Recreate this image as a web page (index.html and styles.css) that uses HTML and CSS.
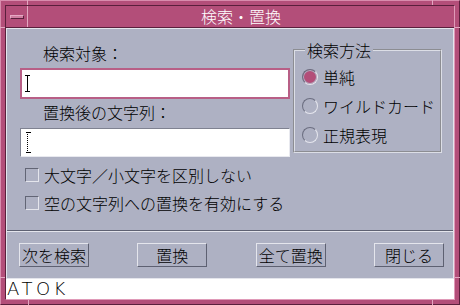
FILE: index.html
```html
<!DOCTYPE html>
<html lang="ja">
<head>
    <meta charset="UTF-8">
    <title>検索・置換</title>
    <link rel="stylesheet" href="styles.css">
</head>
<body>
    <div class="window">
        <!-- 枠のつまみ -->
        <span class="notch notch-top-l"></span>
        <span class="notch notch-top-r"></span>
        <span class="notch notch-bot-l"></span>
        <span class="notch notch-bot-r"></span>
        <span class="notch notch-left-t"></span>
        <span class="notch notch-left-b"></span>
        <span class="notch notch-right-t"></span>
        <span class="notch notch-right-b"></span>

        <div class="inner">
            <div class="titlebar">
                <div class="menu-btn"><span class="dash"></span></div>
                <div class="title">検索・置換</div>
            </div>

            <div class="content">
                <div class="main">
                    <div class="left">
                        <div class="label first">検索対象：</div>
                        <div class="field focused"><span class="ibeam"></span></div>
                        <div class="label second">置換後の文字列：</div>
                        <div class="field plain"><span class="ibeam dotted"></span></div>
                    </div>

                    <fieldset class="method">
                        <legend>検索方法</legend>
                        <div class="radio-row"><span class="radio on"></span>単純</div>
                        <div class="radio-row"><span class="radio"></span>ワイルドカード</div>
                        <div class="radio-row"><span class="radio"></span>正規表現</div>
                    </fieldset>
                </div>

                <div class="checks">
                    <div class="check-row"><span class="checkbox"></span>大文字／小文字を区別しない</div>
                    <div class="check-row"><span class="checkbox"></span>空の文字列への置換を有効にする</div>
                </div>

                <div class="separator"></div>

                <div class="buttons">
                    <button class="btn default">次を検索</button>
                    <button class="btn">置換</button>
                    <button class="btn default">全て置換</button>
                    <button class="btn">閉じる</button>
                </div>
            </div>

            <div class="status">ATOK</div>
        </div>
    </div>
</body>
</html>
```

FILE: styles.css
```css
body {
    margin: 0;
    font-family: "Noto Sans CJK JP", "Liberation Sans", sans-serif;
    font-size: 16px;
    font-weight: 300;
    color: #000000;
}

.window {
    position: relative;
    width: 460px;
    height: 305px;
    box-sizing: border-box;
    background-color: #b34e79;
    border: 1px solid;
    border-color: #d88cad #5a1f3c #5a1f3c #d88cad;
    padding: 4px;
}

.notch {
    position: absolute;
    background-color: #e3a6c0;
}

.notch-top-l, .notch-top-r, .notch-bot-l, .notch-bot-r {
    width: 1px;
    height: 5px;
}

.notch-left-t, .notch-left-b, .notch-right-t, .notch-right-b {
    width: 5px;
    height: 1px;
}

.notch-top-l { left: 26px; top: -1px; }
.notch-top-r { left: 431px; top: -1px; }
.notch-bot-l { left: 27px; bottom: -1px; }
.notch-bot-r { left: 431px; bottom: -1px; }
.notch-left-t { left: -1px; top: 26px; }
.notch-left-b { left: -1px; top: 276px; }
.notch-right-t { right: -1px; top: 26px; }
.notch-right-b { right: -1px; top: 276px; }

.inner {
    height: 100%;
    box-sizing: border-box;
    border: 1px solid;
    border-color: #5a1f3c #e09ab8 #e09ab8 #5a1f3c;
    display: flex;
    flex-direction: column;
}

.titlebar {
    display: flex;
    height: 21px;
    background-color: #b34e79;
    border-bottom: 1px solid #5a1f3c;
}

.menu-btn {
    width: 21px;
    border-right: 1px solid #e3a6c0;
    display: flex;
    align-items: center;
    justify-content: center;
}

.dash {
    width: 12px;
    height: 2px;
    background-color: #cf7ea1;
    border: 1px solid;
    border-color: #e7aac4 #5a1f3c #5a1f3c #e7aac4;
}

.title {
    flex: 1;
    text-align: center;
    color: #ffffff;
    line-height: 21px;
}

.content {
    height: 249px;
    background-color: #aeb1c3;
    border: 1px solid #e4e5ec;
    border-bottom: none;
}

.main {
    display: flex;
    gap: 3px;
    padding: 0 11px 0 13px;
}

.left {
    width: 270px;
}

.label {
    height: 20px;
    line-height: 20px;
    padding-left: 23px;
}

.label.first {
    margin-top: 14px;
}

.label.second {
    margin-top: 3px;
}

.field {
    box-sizing: border-box;
    background-color: #ffffff;
    display: flex;
    align-items: center;
}

.field.focused {
    height: 31px;
    margin-top: 5px;
    border: 2px solid #b85f86;
    padding-left: 4px;
}

.field.plain {
    height: 29px;
    margin-top: 6px;
    border: 1px solid;
    border-color: #7f8291 #e8e9ef #e8e9ef #7f8291;
    padding-left: 5px;
}

.ibeam {
    position: relative;
    width: 1px;
    height: 17px;
    margin-left: 1px;
    background-color: #000000;
}

.ibeam::before, .ibeam::after {
    content: "";
    position: absolute;
    left: -2px;
    width: 5px;
    height: 1px;
    background-color: #000000;
}

.ibeam::before { top: 0; }
.ibeam::after { bottom: 0; }

.ibeam.dotted {
    height: 21px;
    background-color: transparent;
    border-left: 1px dotted #000000;
    width: 0;
}

.method {
    box-sizing: border-box;
    width: 149px;
    height: 111px;
    margin: 13px 0 0 0;
    padding: 4px 0 2px 7px;
    border: 2px groove #dcdee6;
}

.method legend {
    padding: 0 2px;
    margin-left: 3px;
    line-height: 16px;
}

.radio-row {
    display: flex;
    align-items: center;
    gap: 5px;
    height: 29px;
    line-height: 20px;
}

.radio {
    width: 16px;
    height: 16px;
    box-sizing: border-box;
    border-radius: 50%;
    border: 1px solid;
    border-color: #6b6e80 #e6e7ee #e6e7ee #6b6e80;
}

.radio.on {
    background-color: #b34e79;
    box-shadow: inset 0 0 0 1px #aeb1c3;
}

.checks {
    display: flex;
    flex-direction: column;
    gap: 8px;
    margin-top: 8px;
    padding-left: 18px;
}

.check-row {
    display: flex;
    align-items: center;
    gap: 5px;
    height: 20px;
    line-height: 20px;
}

.checkbox {
    width: 14px;
    height: 14px;
    box-sizing: border-box;
    border: 1px solid;
    border-color: #626575 #e4e5ec #e4e5ec #626575;
}

.separator {
    margin-top: 17px;
    border-top: 1px solid #5e6172;
    border-bottom: 1px solid #e4e5ec;
}

.buttons {
    display: flex;
    justify-content: space-between;
    margin-top: 11px;
    padding: 0 9px 0 12px;
}

.btn {
    width: 70px;
    height: 24px;
    padding: 0;
    font-family: inherit;
    font-size: 16px;
    font-weight: 300;
    line-height: 20px;
    color: #000000;
    background-color: #aeb1c3;
    border: 1px solid;
    border-color: #e4e5ec #5e6172 #5e6172 #e4e5ec;
}

.btn.default {
    box-shadow: inset 0 0 0 1px #aeb1c3;
}

.status {
    height: 20px;
    background-color: #ffffff;
    border-top: 1px solid #e4e5ec;
    padding-left: 1px;
    font-family: "DejaVu Sans", "Liberation Sans", sans-serif;
    font-size: 18px;
    font-weight: 200;
    line-height: 20px;
    letter-spacing: 3.5px;
}
```
